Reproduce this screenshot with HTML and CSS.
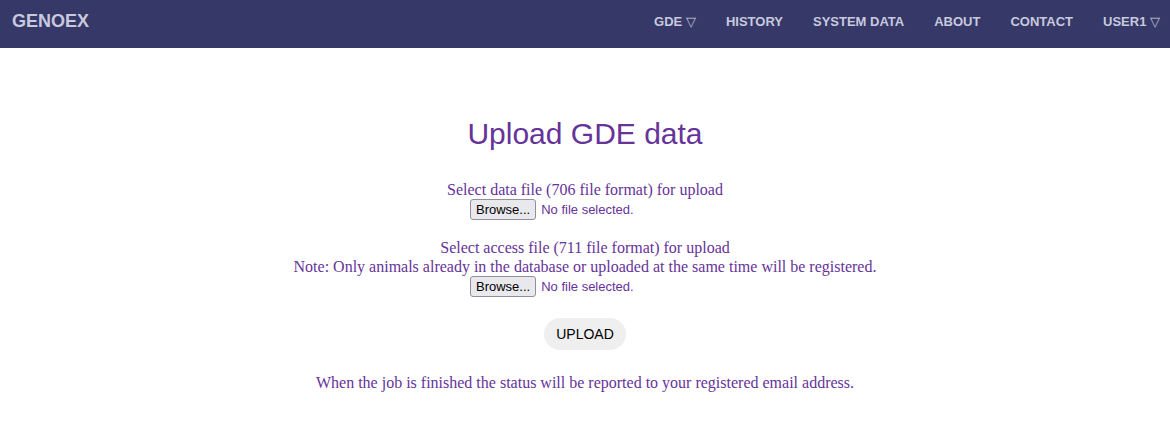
FILE: index.html
```html
<!DOCTYPE html>
<html lang="en">
<head>
    <meta charset="UTF-8">
    <meta name="viewport" content="width=device-width, initial-scale=1.0">
    <title>GenoEx - Upload GDE data</title>
    <link rel="stylesheet" href="styles.css">
</head>
<body>
    <nav class="topnav">
        <a class="brand" href="#">GENOEX</a>
        <ul class="menu">
            <li><a href="#">GDE <span class="caret">&#9661;</span></a></li>
            <li><a href="#">HISTORY</a></li>
            <li><a href="#">SYSTEM DATA</a></li>
            <li><a href="#">ABOUT</a></li>
            <li><a href="#">CONTACT</a></li>
            <li><a href="#">USER1 <span class="caret">&#9661;</span></a></li>
        </ul>
    </nav>

    <form class="upload" method="POST" enctype="multipart/form-data">
        <h1>Upload GDE data</h1>

        <div class="field">
            <div class="line">Select data file (706 file format) for upload</div>
            <label class="file-input">
                <span class="browse">Browse...</span>
                <span class="file-name">No file selected.</span>
            </label>
        </div>

        <div class="field">
            <div class="line">Select access file (711 file format) for upload</div>
            <div class="line">Note: Only animals already in the database or uploaded at the same time will be registered.</div>
            <label class="file-input">
                <span class="browse">Browse...</span>
                <span class="file-name">No file selected.</span>
            </label>
        </div>

        <button type="submit" class="submit">UPLOAD</button>

        <p class="notice">When the job is finished the status will be reported to your registered email address.</p>
    </form>
</body>
</html>
```

FILE: styles.css
```css
/* Reset básico */
body, h1, p, ul {
    margin: 0;
    padding: 0;
}

body {
    background-color: #fff;
    font-family: "Liberation Serif", "Times New Roman", serif;
    color: #663399;
}

/* Barra de navegação */
.topnav {
    display: flex;
    justify-content: space-between;
    align-items: center;
    height: 48px;
    padding: 0 10px 6px 12px;
    box-sizing: border-box;
    background-color: #363868;
    font-family: "Liberation Sans", Arial, sans-serif;
    font-weight: bold;
}

.topnav a {
    color: #c8c9de;
    text-decoration: none;
}

.brand {
    font-size: 18px;
}

.menu {
    display: flex;
    gap: 30px;
    list-style: none;
    font-size: 13px;
}

.caret {
    font-family: "DejaVu Sans", sans-serif;
    font-size: 13px;
}

/* Formulário */
.upload {
    display: flex;
    flex-direction: column;
    align-items: center;
    text-align: center;
    font-size: 16px;
}

.upload h1 {
    margin-top: 68px;
    margin-bottom: 28px;
    font-family: "Liberation Sans", Arial, sans-serif;
    font-size: 30px;
    font-weight: normal;
    line-height: 36px;
}

.field {
    display: flex;
    flex-direction: column;
    align-items: center;
    margin-bottom: 18px;
}

.line {
    line-height: 19px;
}

.file-input {
    display: flex;
    align-items: center;
    gap: 5px;
    width: 230px;
    height: 21px;
    font-family: "Liberation Sans", Arial, sans-serif;
    font-size: 13px;
    cursor: pointer;
}

.browse {
    padding: 2px 5px;
    line-height: 15px;
    color: #000;
    background-color: #e9e9ed;
    border: 1px solid #8f8f9d;
    border-radius: 3px;
}

.submit {
    margin-top: 3px;
    padding: 8px 12px;
    font-family: "Liberation Sans", Arial, sans-serif;
    font-size: 14px;
    line-height: 16px;
    color: #000;
    background-color: #efefef;
    border: none;
    border-radius: 16px;
    cursor: pointer;
}

.notice {
    margin-top: 23px;
    line-height: 19px;
}
```
